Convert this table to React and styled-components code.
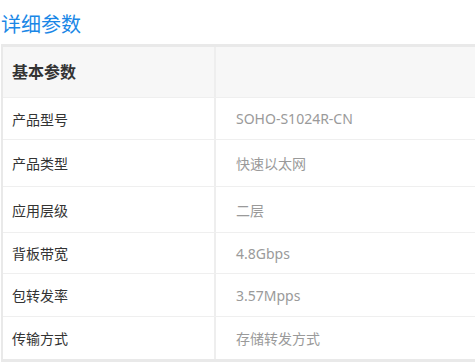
import React from 'react';
import styled, { createGlobalStyle } from 'styled-components';

const GlobalStyle = createGlobalStyle`
	body {
		margin: 0;
		background: #ffffff;
		overflow: hidden;
		font-family: "Noto Sans", "Noto Sans CJK SC", sans-serif;
	}
`;

const rows = [
	{ label: '产品型号', value: 'SOHO-S1024R-CN', h: 42 },
	{ label: '产品类型', value: '快速以太网', h: 47 },
	{ label: '应用层级', value: '二层', h: 46 },
	{ label: '背板带宽', value: '4.8Gbps', h: 41 },
	{ label: '包转发率', value: '3.57Mpps', h: 43 },
	{ label: '传输方式', value: '存储转发方式', h: 43 }
];

const Page = styled.div`
	width: 100%;
	padding-top: 10px;
`;

const Title = styled.h2`
	margin: 0 0 0 1px;
	height: 34px;
	font-size: 20px;
	font-weight: normal;
	line-height: 28px;
	color: #1a87e6;
	font-family: "Noto Sans CJK SC", sans-serif;
`;

const Table = styled.div`
	margin-left: 1px;
	border: 2px solid #e9e9e9;
	border-top-width: 3px;
	border-bottom-width: 3px;
	border-right: none;
	display: flex;
	flex-direction: column;
`;

const Row = styled.div`
	box-sizing: border-box;
	display: grid;
	grid-template-columns: 211px 2px 1fr;
	height: ${(p) => p.h}px;
	background: ${(p) => (p.head ? '#f7f7f7' : '#ffffff')};
	border-top: ${(p) => (p.head ? 'none' : '1px solid #efefef')};
`;

const Divider = styled.div`
	background: #eeeeee;
`;

const Label = styled.div`
	display: flex;
	align-items: center;
	padding-left: 9px;
	padding-bottom: ${(p) => (p.head ? '2px' : '0')};
	font-size: ${(p) => (p.head ? '16px' : '14px')};
	font-weight: ${(p) => (p.head ? 'bold' : 'normal')};
	color: #333333;
	font-family: "Noto Sans CJK SC", sans-serif;
`;

const Value = styled.div`
	display: flex;
	align-items: center;
	padding-left: 20px;
	font-size: 14px;
	color: #9a9a9a;
`;

export default function App() {
	return (
		<Page>
			<GlobalStyle />
			<Title>详细参数</Title>
			<Table>
				<Row head h={50}>
					<Label head>基本参数</Label>
					<Divider />
					<Value />
				</Row>
				{rows.map((r) => (
					<Row key={r.label} h={r.h}>
						<Label>{r.label}</Label>
						<Divider />
						<Value>{r.value}</Value>
					</Row>
				))}
			</Table>
		</Page>
	);
}
